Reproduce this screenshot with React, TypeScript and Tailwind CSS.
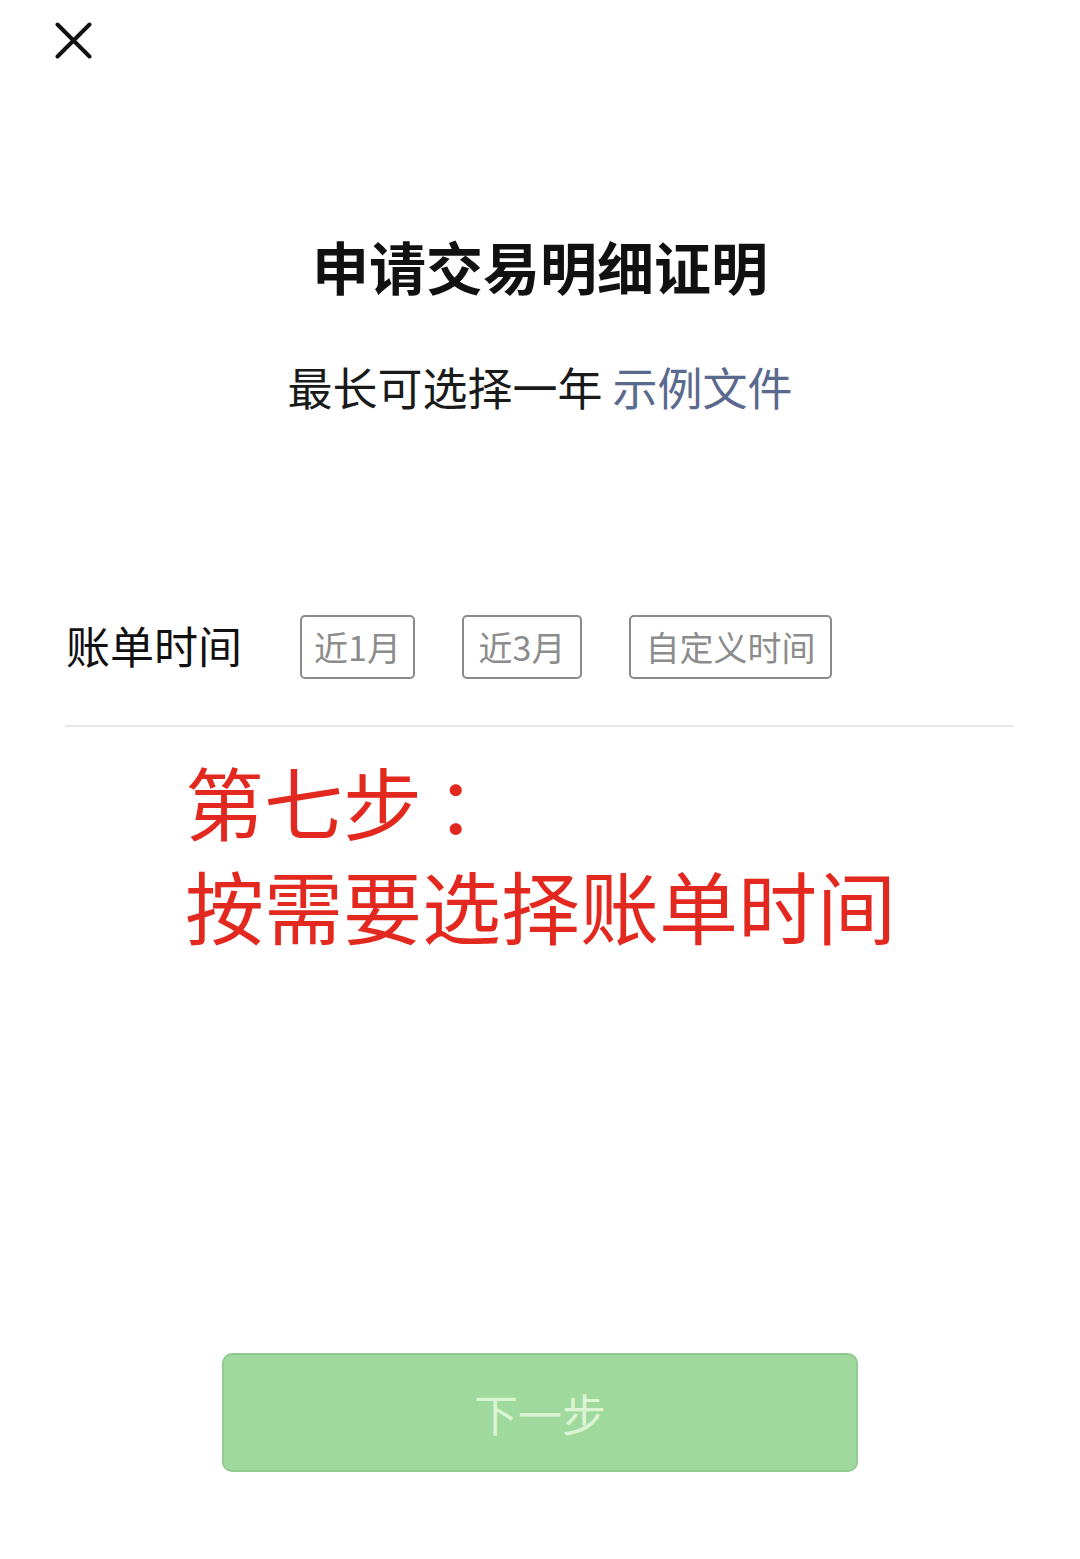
import React from "react";

const font = { fontFamily: '"Noto Sans CJK SC", "Noto Sans", sans-serif' };

export default function App() {
  const ranges = [
    { label: "近1月", w: "w-[115px]" },
    { label: "近3月", w: "w-[120px]" },
    { label: "自定义时间", w: "w-[203px]" }
  ];

  return (
    <div className="w-[1080px] h-[1559px] bg-white flex flex-col" style={font}>
      {/* 關閉 */}
      <div className="pl-[55px] pt-[22px]">
        <svg width="37" height="37" viewBox="0 0 37 37">
          <path d="M2.5 2.5 L34.5 34.5 M34.5 2.5 L2.5 34.5" stroke="#111" strokeWidth="4" strokeLinecap="round" />
        </svg>
      </div>

      <h1 className="mt-[178px] text-center text-[57px] leading-[57px] font-bold text-[#111]">
        申请交易明细证明
      </h1>

      <p className="mt-[70px] text-center text-[45px] leading-[45px] text-[#1a1a1a]">
        最长可选择一年 <span className="text-[#5a6a8e]">示例文件</span>
      </p>

      {/* 帳單時間 */}
      <div className="mt-[206px] pl-[66px] flex items-center h-[64px]">
        <span className="text-[44px] leading-[44px] text-[#111] w-[234px] -mt-[4px]">账单时间</span>
        <div className="flex gap-[47px]">
          {ranges.map(r => (
            <div
              key={r.label}
              className={`${r.w} h-[64px] border-2 border-[#8a8a8a] rounded-[5px] flex items-center justify-center text-[34px] leading-[34px] text-[#8c8c8c]`}
            >
              {r.label}
            </div>
          ))}
        </div>
      </div>

      <div className="mt-[46px] ml-[65px] w-[949px] h-[2px] bg-[#e8e8e8]" />

      <div className="mt-[22px] pl-[185px] text-[79px] leading-[104px] text-[#e3291f]">
        <div>
          第七步<span className="ml-[14px]">：</span>
        </div>
        <div>按需要选择账单时间</div>
      </div>

      <button className="mt-[396px] mx-auto w-[636px] h-[119px] rounded-[10px] bg-[#9fd99e] border-2 border-[#92c991] text-[44px] text-[#dcf4d4]">
        下一步
      </button>
    </div>
  );
}
